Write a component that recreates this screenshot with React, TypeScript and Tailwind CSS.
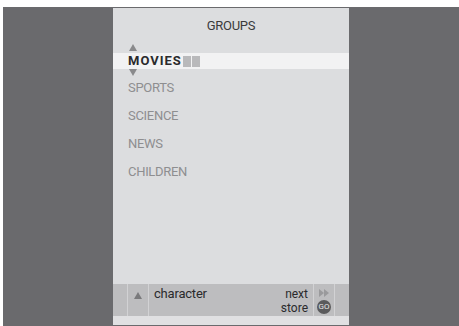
import React from 'react';

const items = ['SPORTS', 'SCIENCE', 'NEWS', 'CHILDREN'];

const Tri: React.FC<{ down?: boolean; className?: string }> = ({ down, className }) => (
  <svg width="8" height="8" viewBox="0 0 8 8" className={className}>
    <polygon points={down ? '0,1 8,1 4,8' : '4,0 8,7 0,7'} fill="currentColor" />
  </svg>
);

const App: React.FC = () => {
  return (
    <div className="h-[326px] w-[459px] overflow-hidden bg-white pl-[3px] pt-[7px]" style={{ fontFamily: 'Roboto, "Open Sans", sans-serif' }}>
      <div className="flex h-[319px] w-[456px] bg-[#6a6a6d] pl-[110px] pt-[1px]">
        <div className="flex h-[317px] w-[236px] flex-col bg-[#dcdddf]">
          {/* title */}
          <div className="flex h-[45px] justify-center pt-[11px]">
            <span className="text-[13px] leading-[14px] tracking-[-0.3px] text-[#3a3a3c]">GROUPS</span>
          </div>

          {/* selected row */}
          <div className="relative flex h-[16px] items-center bg-[#f2f2f3] pl-[15px]">
            <Tri className="absolute left-[16px] top-[-9px] text-[#8a8a8c]" />
            <span className="text-[13px] font-bold leading-[14px] tracking-[1px] text-[#2a2a2c]">MOVIES</span>
            <div className="ml-[1px] flex h-[11px] gap-[1px]">
              <div className="w-[8px] bg-[#b9b9bb]" />
              <div className="w-[8px] bg-[#b9b9bb]" />
            </div>
            <Tri down className="absolute left-[16px] top-[15px] text-[#8a8a8c]" />
          </div>

          {/* list */}
          <div className="mt-[5px] flex flex-col">
            {items.map((item) => (
              <div key={item} className="flex h-[28px] items-center pl-[15px]">
                <span className="text-[13px] leading-[14px] tracking-[-0.3px] text-[#8e8e90]">{item}</span>
              </div>
            ))}
          </div>

          <div className="flex-1" />

          {/* bottom bar */}
          <div className="flex h-[32px] bg-[#bdbdbf]">
            <div className="w-[14px]" />
            <div className="w-px bg-[#d2d2d4]" />
            <div className="flex w-[20px] justify-center pt-[8px]">
              <Tri className="text-[#7a7a7c]" />
            </div>
            <div className="w-px bg-[#d2d2d4]" />
            <div className="flex w-[164px] justify-between pl-[5px] pr-[5px] pt-[3px] text-[#2a2a2c]">
              <span className="text-[13px] leading-[13px] tracking-[-0.2px]">character</span>
              <div className="flex flex-col items-end text-[12px] leading-[14px]">
                <span>next</span>
                <span>store</span>
              </div>
            </div>
            <div className="w-px bg-[#d2d2d4]" />
            <div className="flex w-[20px] flex-col items-center pt-[5px]">
              <svg width="11" height="8" viewBox="0 0 11 8" className="text-[#9a9a9c]">
                <polygon points="0,0 5,4 0,8" fill="currentColor" />
                <polygon points="5,0 10,4 5,8" fill="currentColor" />
              </svg>
              <div className="mt-[3px] flex h-[14px] w-[14px] items-center justify-center rounded-full bg-[#5a5a5c] text-[8px] leading-none text-[#e8e8e8]">
                GO
              </div>
            </div>
            <div className="w-px bg-[#d2d2d4]" />
            <div className="w-[14px]" />
          </div>
          <div className="h-[9px] bg-[#e0e0e2]" />
        </div>
      </div>
    </div>
  );
};

export default App;
